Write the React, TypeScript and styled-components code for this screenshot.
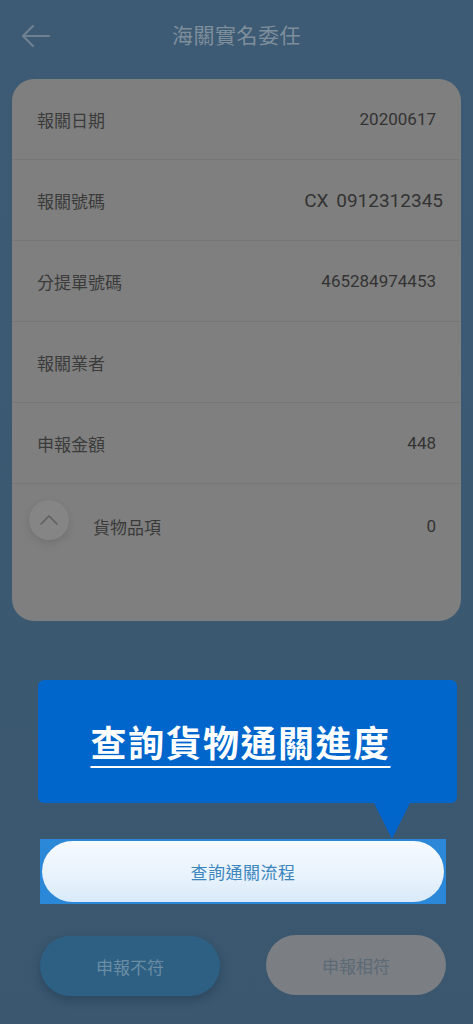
import styled, { createGlobalStyle } from 'styled-components';

const GlobalStyle = createGlobalStyle`
  html, body {
    margin: 0;
    padding: 0;
    background: #3c5a73;
  }
  body {
    font-family: "Noto Sans CJK TC", "Noto Sans", sans-serif;
  }
`;

const Page = styled.div`
  width: 473px;
  min-height: 1024px;
  background: linear-gradient(180deg, #3d5b75 0%, #3a576f 100%);
  display: flex;
  flex-direction: column;
  align-items: flex-start;
  overflow: hidden;
`;

const Header = styled.header`
  width: 100%;
  height: 79px;
  box-sizing: border-box;
  position: relative;
  display: flex;
  align-items: center;
  justify-content: center;
  padding-bottom: 12px;
`;

const BackButton = styled.button`
  position: absolute;
  left: 20px;
  top: 20px;
  width: 32px;
  height: 32px;
  padding: 0;
  border: none;
  background: none;
  display: flex;
  align-items: center;
  justify-content: center;
`;

const Title = styled.h1`
  margin: 0;
  font-size: 21px;
  font-weight: 400;
  color: #7f8e9b;
  letter-spacing: 0.5px;
`;

const Card = styled.section`
  width: 449px;
  margin-left: 12px;
  box-sizing: border-box;
  background: #7f7f7f;
  border-radius: 22px;
  padding-bottom: 53px;
`;

const Row = styled.div<{ $last?: boolean }>`
  height: ${({ $last }) => ($last ? '84px' : '81px')};
  box-sizing: border-box;
  padding: 0 25px;
  display: flex;
  align-items: center;
  border-bottom: ${({ $last }) => ($last ? 'none' : '1px solid #777777')};
`;

const Label = styled.span`
  flex: 1;
  font-size: 17px;
  color: #3b3b3b;
`;

const Value = styled.span<{ $big?: boolean }>`
  font-family: Roboto, "Noto Sans CJK TC", sans-serif;
  font-size: ${({ $big }) => ($big ? '19px' : '17px')};
  color: #333333;
  margin-right: ${({ $big }) => ($big ? '-7px' : '0')};
  word-spacing: ${({ $big }) => ($big ? '3px' : '0')};
`;

const Toggle = styled.div`
  width: 40px;
  height: 40px;
  border-radius: 50%;
  background: #858585;
  box-shadow: 0 3px 8px rgba(0, 0, 0, 0.12);
  display: flex;
  align-items: center;
  justify-content: center;
  margin: -12px 24px 0 -8px;
`;

const Guide = styled.div`
  margin: 218px 0 0 40px;
  position: relative;
`;

const Tip = styled.div`
  position: absolute;
  left: -2px;
  bottom: calc(100% + 36px);
  width: 419px;
  height: 123px;
  background: #0066cc;
  border-radius: 6px;
  display: flex;
  align-items: center;
  justify-content: center;
  padding-bottom: 2px;
  box-sizing: border-box;

  &::after {
    content: '';
    position: absolute;
    left: 336px;
    top: 100%;
    border-left: 18px solid transparent;
    border-right: 18px solid transparent;
    border-top: 36px solid #0066cc;
  }
`;

const TipText = styled.span`
  font-size: 36px;
  font-weight: 700;
  color: #ffffff;
  letter-spacing: 1.5px;
  text-decoration: underline;
  text-decoration-thickness: 2px;
  text-underline-offset: 9px;
  margin-left: -14px;
`;

const Highlight = styled.div`
  width: 406px;
  height: 65px;
  box-sizing: border-box;
  padding: 2px;
  background: #2b87d7;
`;

const FlowButton = styled.button`
  width: 100%;
  height: 100%;
  border: none;
  border-radius: 31px;
  background: linear-gradient(180deg, #f6faff 0%, #e7f2fc 60%, #d9eaf9 100%);
  font-family: inherit;
  font-size: 17px;
  color: #3d86bd;
  letter-spacing: 0.5px;
`;

const Actions = styled.div`
  width: 406px;
  margin: 31px 0 0 40px;
  display: flex;
  justify-content: space-between;
`;

const ActionButton = styled.button<{ $tone: 'blue' | 'grey' }>`
  width: 180px;
  height: 60px;
  border: none;
  border-radius: 30px;
  font-family: inherit;
  font-size: 17px;
  background: ${({ $tone }) => ($tone === 'blue' ? '#2e6083' : '#7b7e82')};
  color: ${({ $tone }) => ($tone === 'blue' ? '#6a8da3' : '#5c6a76')};
  box-shadow: ${({ $tone }) =>
    $tone === 'blue' ? '0 4px 8px rgba(20, 40, 60, 0.35)' : 'none'};
  margin-top: ${({ $tone }) => ($tone === 'blue' ? '1px' : '0')};
`;

const rows = [
  { label: '報關日期', value: '20200617' },
  { label: '報關號碼', value: 'CX 0912312345', big: true },
  { label: '分提單號碼', value: '465284974453' },
  { label: '報關業者', value: '' },
  { label: '申報金額', value: '448' },
];

export default function App() {
  return (
    <>
      <GlobalStyle />
      <Page>
        <Header>
          <BackButton aria-label="back">
            <svg width="30" height="24" viewBox="0 0 30 24" fill="none">
              <path
                d="M28 12H3M12 2L2 12l10 10"
                stroke="#6f8090"
                strokeWidth="2.2"
                strokeLinecap="round"
                strokeLinejoin="round"
              />
            </svg>
          </BackButton>
          <Title>海關實名委任</Title>
        </Header>

        <Card>
          {rows.map((r) => (
            <Row key={r.label}>
              <Label>{r.label}</Label>
              <Value $big={r.big}>{r.value}</Value>
            </Row>
          ))}
          <Row $last>
            <Toggle>
              <svg width="20" height="12" viewBox="0 0 20 12" fill="none">
                <path
                  d="M2 10l8-8 8 8"
                  stroke="#5f5f5f"
                  strokeWidth="1.6"
                  strokeLinecap="round"
                  strokeLinejoin="round"
                />
              </svg>
            </Toggle>
            <Label>貨物品項</Label>
            <Value>0</Value>
          </Row>
        </Card>

        <Guide>
          <Tip>
            <TipText>查詢貨物通關進度</TipText>
          </Tip>
          <Highlight>
            <FlowButton>查詢通關流程</FlowButton>
          </Highlight>
        </Guide>

        <Actions>
          <ActionButton $tone="blue">申報不符</ActionButton>
          <ActionButton $tone="grey">申報相符</ActionButton>
        </Actions>
      </Page>
    </>
  );
}
